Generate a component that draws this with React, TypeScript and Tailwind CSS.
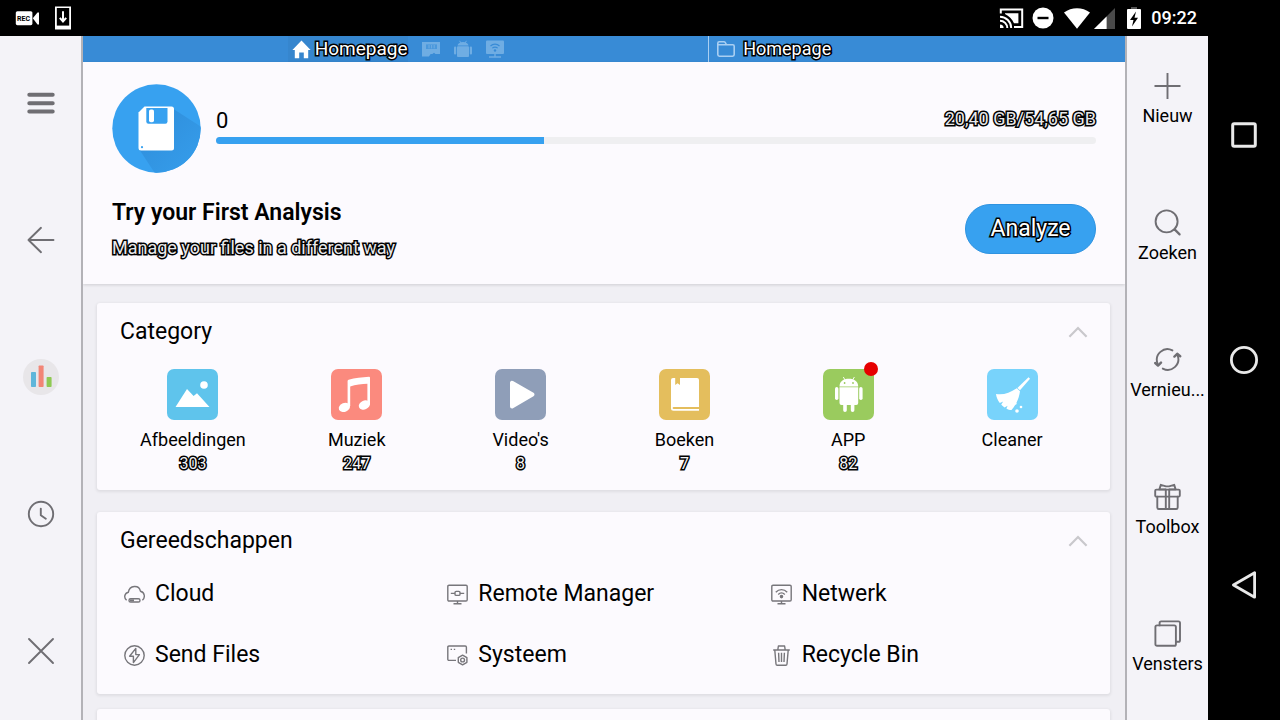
import type { ReactNode } from "react";

const outlined = "[-webkit-text-stroke:3px_#000] [paint-order:stroke_fill]";

/* ---------- status bar icons ---------- */

function RecIcon() {
  return (
    <svg width="25" height="16" viewBox="0 0 25 16" aria-hidden="true">
      <rect x="0.8" y="1.2" width="16.6" height="14" rx="1.6" fill="#fff" />
      <path d="M17.8 8.2 L22.5 2.6 H24 V14.4 H22.5 Z" fill="#fff" />
      <text x="2" y="11" fontSize="7" fontWeight="700" fontFamily="Roboto, sans-serif" fill="#000">
        REC
      </text>
    </svg>
  );
}

function PhoneDownloadIcon() {
  return (
    <svg width="18" height="24" viewBox="0 0 18 24" aria-hidden="true">
      <rect x="1" y="0.5" width="16" height="23" fill="#fff" />
      <rect x="2.8" y="2" width="12.4" height="17.6" fill="#000" />
      <path d="M9 5.2 V14.5 M5.8 11.8 L9 15.4 L12.2 11.8" fill="none" stroke="#fff" strokeWidth="2" />
    </svg>
  );
}

function CastIcon() {
  return (
    <svg width="25" height="21" viewBox="0 0 25 21" fill="none" stroke="#fff" aria-hidden="true">
      <path d="M1.8 5.5 V1.5 H23.2 V19 H15" strokeWidth="2" />
      <path d="M6 6 V5.3 H19.4 V15.2 H15 C13 11 10 8 6 6 Z" fill="#fff" stroke="none" />
      <path d="M1 8.8 C7 8.8 12.2 13.8 12.2 20 M1 12.7 C5 12.7 8.3 16 8.3 20" strokeWidth="2" />
      <path d="M1 16.4 A3.6 3.6 0 0 1 4.6 20 H1 Z" fill="#fff" stroke="none" />
    </svg>
  );
}

function DoNotDisturbIcon() {
  return (
    <svg width="22" height="22" viewBox="0 0 22 22" aria-hidden="true">
      <circle cx="11" cy="11" r="10.5" fill="#fff" />
      <rect x="5.5" y="9.8" width="11" height="2.4" fill="#000" />
    </svg>
  );
}

function WifiIcon() {
  return (
    <svg width="26" height="21" viewBox="0 0 26 21" aria-hidden="true">
      <path d="M0 4.4 C7.5 -1.3 18.5 -1.3 26 4.4 L13 20.7 Z" fill="#fff" />
    </svg>
  );
}

function SignalIcon() {
  return (
    <svg width="21" height="21" viewBox="0 0 21 21" aria-hidden="true">
      <path d="M0 21 L21 0 V21 Z" fill="#4a4a4a" />
      <path d="M0 21 L12.6 8.4 V21 Z" fill="#fff" />
    </svg>
  );
}

function BatteryIcon() {
  return (
    <svg width="14" height="22" viewBox="0 0 14 22" aria-hidden="true">
      <rect x="4" y="0" width="6" height="2.5" fill="#555" />
      <rect x="0" y="2" width="14" height="20" rx="1" fill="#fff" />
      <path d="M9 4.5 L3 13 H6.5 L5 19.5 L11 10.8 H7.5 Z" fill="#000" />
    </svg>
  );
}

/* ---------- tab bar icons ---------- */

function HomeIcon() {
  return (
    <svg width="19" height="19" viewBox="0 0 19 19" fill="#fff" aria-hidden="true">
      <path d="M9.5 0.5 L18.6 10 H16.2 V18.3 H11.8 V12.6 H7.2 V18.3 H2.8 V10 H0.4 Z" />
    </svg>
  );
}

function SdCardIcon() {
  return (
    <svg width="18" height="18" viewBox="0 0 18 18" aria-hidden="true">
      <path d="M0 2 H18 V14 H13.5 L12 12.8 L10.4 14 H8.6 L7 16.4 H0 Z" fill="#6fade3" />
      <rect x="4" y="4.4" width="11" height="4.6" fill="#4a98dc" />
      <path d="M7 5 V8.4 M9.6 5 V8.4 M12.2 5 V8.4" stroke="#6fade3" />
    </svg>
  );
}

function AndroidSmallIcon() {
  return (
    <svg width="18" height="18" viewBox="0 0 18 18" fill="#6fade3" aria-hidden="true">
      <path d="M3.5 5.5 C4 0.8 14 0.8 14.5 5.5 Z" />
      <rect x="3" y="6.3" width="12" height="10.7" rx="1" />
      <rect x="0" y="6.5" width="2.2" height="8" rx="1" />
      <rect x="15.8" y="6.5" width="2.2" height="8" rx="1" />
      <path d="M5.5 0.8 L7 3 M12.5 0.8 L11 3" stroke="#6fade3" />
    </svg>
  );
}

function NetworkSmallIcon() {
  return (
    <svg width="18" height="18" viewBox="0 0 18 18" aria-hidden="true">
      <rect x="0" y="0.5" width="18" height="13.5" rx="1" fill="#6fade3" />
      <path d="M9 14 V17 M3 17 H15" stroke="#6fade3" strokeWidth="1.4" />
      <path d="M4.5 6 C7 3.5 11 3.5 13.5 6 M6.3 8.2 C8 6.8 10 6.8 11.7 8.2" fill="none" stroke="#388bd6" strokeWidth="1.1" />
      <circle cx="9" cy="10.5" r="1.2" fill="#388bd6" />
    </svg>
  );
}

function FolderIcon() {
  return (
    <svg width="18" height="16" viewBox="0 0 18 16" fill="none" stroke="#a9cff2" strokeWidth="1.6" aria-hidden="true">
      <path d="M0.8 3 V13.6 Q0.8 15.2 2.4 15.2 H15.6 Q17.2 15.2 17.2 13.6 V5.2 Q17.2 3.8 15.8 3.8 H9.6 L8 1.2 Q7.7 0.8 7 0.8 H2.2 Q0.8 0.8 0.8 2.2 Z M0.8 3.8 H9.5" />
    </svg>
  );
}

/* ---------- side rail icons ---------- */

function Line({ children }: { children: ReactNode }) {
  return (
    <svg
      width="28"
      height="28"
      viewBox="0 0 28 28"
      className="shrink-0"
      fill="none"
      stroke="#6f6e73"
      strokeWidth="1.9"
      strokeLinecap="round"
      strokeLinejoin="round"
      aria-hidden="true"
    >
      {children}
    </svg>
  );
}

const leftRail: { label: string; icon: ReactNode }[] = [
  {
    label: "Menu",
    icon: (
      <Line>
        <path d="M2.3 5.8 H25.7 M2.3 14.2 H25.7 M2.3 22.6 H25.7" strokeWidth="4" />
      </Line>
    ),
  },
  {
    label: "Back",
    icon: (
      <Line>
        <path d="M26.5 14 H1.5 M14 1.8 L1.5 14 L14 26.2" />
      </Line>
    ),
  },
  {
    label: "Analysis",
    icon: (
      <svg width="36" height="36" viewBox="0 0 36 36" aria-hidden="true">
        <circle cx="18" cy="18" r="18" fill="#e8e6e9" />
        <rect x="8" y="13" width="5" height="15" rx="0.8" fill="#5fb6da" />
        <rect x="15.6" y="6.5" width="5" height="21.5" rx="0.8" fill="#f28576" />
        <rect x="23.6" y="18" width="5" height="10" rx="0.8" fill="#8fc954" />
      </svg>
    ),
  },
  {
    label: "History",
    icon: (
      <Line>
        <circle cx="14" cy="14" r="12.2" />
        <path d="M13.8 8.6 V15.3 L18.8 18.8" />
      </Line>
    ),
  },
  {
    label: "Close",
    icon: (
      <Line>
        <path d="M2 2 L26 26 M26 2 L2 26" />
      </Line>
    ),
  },
];

const rightRail: { label: string; icon: ReactNode }[] = [
  {
    label: "Nieuw",
    icon: (
      <Line>
        <path d="M13.5 1 V27 M0.5 14 H26.5" strokeLinecap="butt" />
      </Line>
    ),
  },
  {
    label: "Zoeken",
    icon: (
      <Line>
        <circle cx="12.6" cy="12.4" r="11" />
        <path d="M20.6 20.4 L25.6 25.4" strokeWidth="2.2" />
      </Line>
    ),
  },
  {
    label: "Vernieu...",
    icon: (
      <Line>
        <path d="M18.4 4.4 A10.6 10.6 0 0 0 3.6 17.6 M8.8 22.6 A10.6 10.6 0 0 0 23.6 9.4" />
        <path d="M1.2 17 L4 19.6 L7 16.6 M20.4 10.6 L23.2 7.8 L26.2 10.2" strokeWidth="2.4" />
      </Line>
    ),
  },
  {
    label: "Toolbox",
    icon: (
      <Line>
        <rect x="1.2" y="6.6" width="24.6" height="7" rx="1.2" />
        <path d="M3.3 13.6 V24.6 Q3.3 26 4.7 26 H22.3 Q23.7 26 23.7 24.6 V13.6 M11.8 6.6 V26 M15.2 6.6 V26" />
        <path d="M11.6 6.4 H5.4 L6.8 1.8 L12 3.4 H15 L20.2 1.8 L21.6 6.4 H15.4" />
      </Line>
    ),
  },
  {
    label: "Vensters",
    icon: (
      <Line>
        <rect x="1.4" y="5.4" width="20.5" height="20.4" rx="1.6" />
        <path d="M5.6 5.4 V3 Q5.6 1.4 7.2 1.4 H24.4 Q26 1.4 26 3 V20.2 Q26 21.8 24.4 21.8 H22" />
      </Line>
    ),
  },
];

/* ---------- categories ---------- */

type Category = { label: string; count?: string; tile: string; badge?: boolean; icon: ReactNode };

const categories: Category[] = [
  {
    label: "Afbeeldingen",
    count: "303",
    tile: "bg-[#5fc4ec]",
    icon: (
      <>
        <circle cx="37" cy="16" r="3.8" />
        <path d="M8.5 38 L20 20 L26.6 27 L30 24.2 L42.5 38 Z" />
      </>
    ),
  },
  {
    label: "Muziek",
    count: "247",
    tile: "bg-[#fb8a7e]",
    icon: (
      <>
        <path d="M16.6 12 Q16.6 11 17.6 10.7 C24 9 31 8.2 38 7.8 Q39 7.8 39 8.8 V35 H36.4 V14.8 C31 15 24.5 15.6 19.2 17.4 V37 H16.6 Z" />
        <ellipse cx="13.4" cy="38.3" rx="5.8" ry="4.4" transform="rotate(-22 13.4 38.3)" />
        <ellipse cx="33.4" cy="36" rx="5.8" ry="4.4" transform="rotate(-22 33.4 36)" />
      </>
    ),
  },
  {
    label: "Video's",
    count: "8",
    tile: "bg-[#8f9eb8]",
    icon: (
      <path
        d="M17 13.8 V37.4 L37.5 25.5 Z"
        stroke="#fff"
        strokeWidth="4"
        strokeLinejoin="round"
      />
    ),
  },
  {
    label: "Boeken",
    count: "7",
    tile: "bg-[#e4be5d]",
    icon: (
      <>
        <path d="M14 9 H16.2 V16 L18.6 14.2 L21 16 V9 H38 Q40 9 40 11 V38 H15 Q13.6 38 13.6 39 Q13.6 40 15 40 H40 V41.8 H14.5 Q12 41.8 12 39.3 V11 Q12 9 14 9 Z" />
        <path d="M14.5 38.9 H40" stroke="#e4be5d" strokeWidth="1.2" />
      </>
    ),
  },
  {
    label: "APP",
    count: "82",
    tile: "bg-[#9acb5e]",
    badge: true,
    icon: (
      <>
        <path d="M16.5 17.5 C16.5 12.4 20.5 9.8 25.8 9.8 C31 9.8 35.2 12.4 35.2 17.5 Z" />
        <path d="M20.3 8 L22.3 11.4 M31.4 8 L29.4 11.4" stroke="#fff" strokeWidth="0.9" />
        <circle cx="21.6" cy="14" r="0.9" fill="#9acb5e" />
        <circle cx="30" cy="14" r="0.9" fill="#9acb5e" />
        <path d="M16.5 18.2 H35.2 V34 Q35.2 36 33.2 36 H31.4 V41.2 Q31.4 43 29.6 43 Q27.8 43 27.8 41.2 V36 H23.8 V41.2 Q23.8 43 22 43 Q20.2 43 20.2 41.2 V36 H18.5 Q16.5 36 16.5 34 Z" />
        <rect x="12" y="18" width="3.4" height="13" rx="1.7" />
        <rect x="36.2" y="18" width="3.4" height="13" rx="1.7" />
      </>
    ),
  },
  {
    label: "Cleaner",
    tile: "bg-[#78d3fb]",
    icon: (
      <>
        <path d="M41.5 8.2 L43 9.8 L33 21.2 L30.4 19 Z" />
        <path d="M29.8 19.2 L33 22.2 C32.2 28.5 29.5 35.5 24.5 41 C22.6 41 21 40.4 19.4 39.4 L20.6 36.8 L17.6 38.4 C16.2 37.6 15 36.6 14.2 35.6 L16.2 32.6 L12.8 34 C10.8 31.6 9.4 28.4 9 25 C16.5 26.2 22.8 23.8 29.8 19.2 Z" />
        <circle cx="28.6" cy="34.6" r="1.1" />
        <circle cx="34" cy="38" r="1.3" />
        <circle cx="30" cy="42" r="1.8" />
      </>
    ),
  },
];

/* ---------- tools ---------- */

const tools: { label: string; icon: ReactNode }[] = [
  {
    label: "Cloud",
    icon: (
      <>
        <path d="M2.6 16.2 C-0.6 13.6 0.6 9 4.4 8.2 C5.4 0.8 15.2 0.6 16.4 7.2 C21.2 8.2 21.2 14 18.4 16.2" />
        <rect x="5" y="14.8" width="11" height="3.2" rx="1.6" />
        <path d="M6 16.4 H10" strokeWidth="2" />
      </>
    ),
  },
  {
    label: "Remote Manager",
    icon: (
      <>
        <rect x="0.8" y="1.2" width="19.4" height="15.8" rx="1.2" />
        <path d="M10.5 17 V19.6 M6.5 19.7 H14.5 M3.8 9.4 H8 M13 9.4 H17.2" />
        <rect x="8" y="7.4" width="5" height="4" rx="1.2" />
      </>
    ),
  },
  {
    label: "Netwerk",
    icon: (
      <>
        <rect x="0.8" y="1.2" width="19.4" height="15.8" rx="1.2" />
        <path d="M10.5 17 V19.6 M6.5 19.7 H14.5 M4.8 8.2 C8 4.8 13 4.8 16.2 8.2 M7.2 10.4 C9.2 8.4 11.8 8.4 13.8 10.4" />
        <circle cx="10.5" cy="12.6" r="1.1" fill="#77767b" />
      </>
    ),
  },
  {
    label: "Send Files",
    icon: (
      <>
        <circle cx="10.5" cy="10.5" r="9.7" />
        <path d="M11.8 3.4 L5.6 11.2 H9.4 V17.6 L15.4 9.6 H11.8 Z" />
      </>
    ),
  },
  {
    label: "Systeem",
    icon: (
      <>
        <path d="M9 15.4 H2 Q0.8 15.4 0.8 14.2 V2.2 Q0.8 1 2 1 H18.2 Q19.4 1 19.4 2.2 V8.6 M3.6 4.4 H5 M6.8 4.4 H8.2" />
        <path d="M15.6 10.2 L19.9 12.7 V17.3 L15.6 19.8 L11.3 17.3 V12.7 Z" />
        <circle cx="15.6" cy="15" r="1.9" />
      </>
    ),
  },
  {
    label: "Recycle Bin",
    icon: (
      <>
        <path d="M2.2 5 H18.8 M6.8 4.8 L7.4 1 H13.6 L14.2 4.8 M3.8 5.2 L5 19 Q5.1 20.2 6.2 20.2 H14.8 Q15.9 20.2 16 19 L17.2 5.2" />
        <path d="M7.6 7.8 L8 17 M10.5 7.8 V17 M13.4 7.8 L13 17" />
      </>
    ),
  },
];

function CardHeader({ title }: { title: string }) {
  return (
    <button type="button" aria-expanded="true" className="flex w-full items-center justify-between pt-[15px] pr-[22px] pl-[23px] text-left">
      <h2 className="text-[23px] leading-7">{title}</h2>
      <svg width="20" height="12" viewBox="0 0 20 12" fill="none" stroke="#c9c8cc" strokeWidth="2.2" aria-hidden="true">
        <path d="M1.4 10.8 L10 2 L18.6 10.8" />
      </svg>
    </button>
  );
}

function Card({ children }: { children?: ReactNode }) {
  return (
    <section className="rounded-[3px] bg-[#fcfafe] shadow-[0_1px_3px_1px_rgba(0,0,0,0.07)]">{children}</section>
  );
}

export default function App() {
  return (
    <div className="flex h-screen overflow-hidden bg-black font-[Roboto,sans-serif] text-black">
      <div className="flex min-w-0 flex-1 flex-col">
        <header className="flex h-9 shrink-0 items-center justify-between pr-[11px] pl-[15px]">
          <div className="flex items-center gap-[14px]">
            <RecIcon />
            <PhoneDownloadIcon />
          </div>
          <div className="flex items-center text-white">
            <CastIcon />
            <span className="pl-2">
              <DoNotDisturbIcon />
            </span>
            <span className="pl-2.5">
              <WifiIcon />
            </span>
            <span className="pl-1">
              <SignalIcon />
            </span>
            <span className="pl-3">
              <BatteryIcon />
            </span>
            <time className="pl-2.5 text-lg leading-6 font-medium">09:22</time>
          </div>
        </header>

        <div className="flex min-h-0 flex-1">
          <nav aria-label="Navigation" className="grid w-[83px] shrink-0 grid-rows-5 border-r-2 border-[#b3b2b7] bg-[#f4f3f8]">
            {leftRail.map((item) => (
              <button key={item.label} type="button" aria-label={item.label} className="flex items-center justify-center pb-0.5">
                {item.icon}
              </button>
            ))}
          </nav>

          <main className="flex min-w-0 flex-1 flex-col overflow-hidden bg-[#f0eff4]">
            <div className="flex h-[26px] shrink-0 bg-[#388bd6] text-white">
              <div className="flex w-3/5 items-center justify-center gap-[14px]">
                <button type="button" className="flex h-full items-center gap-1 bg-[#3686ce] pl-1">
                  <HomeIcon />
                  <span className={`text-[19px] leading-6 ${outlined}`}>Homepage</span>
                </button>
                <SdCardIcon />
                <AndroidSmallIcon />
                <NetworkSmallIcon />
              </div>
              <button type="button" className="flex flex-1 items-center gap-2 border-l border-[#a9cff2] pl-2">
                <FolderIcon />
                <span className={`text-lg leading-6 ${outlined}`}>Homepage</span>
              </button>
            </div>

            <section className="shrink-0 bg-[#fcfafe] px-[29px] py-[22px] shadow-[0_1px_3px_rgba(0,0,0,0.14)]">
              <div className="flex items-center gap-[15px]">
                <svg width="89" height="89" viewBox="0 0 89 89" className="shrink-0" aria-hidden="true">
                  <defs>
                    <clipPath id="disc">
                      <circle cx="44.5" cy="44.5" r="44.2" />
                    </clipPath>
                    <linearGradient id="cast-shadow" x1="0" y1="0" x2="1" y2="1">
                      <stop offset="0.2" stopColor="#3090dd" />
                      <stop offset="0.75" stopColor="#359cea" />
                    </linearGradient>
                  </defs>
                  <circle cx="44.5" cy="44.5" r="44.2" fill="#37a1f0" />
                  <path d="M60 24 L100 50 V100 H50 L27 65 Z" fill="url(#cast-shadow)" clipPath="url(#disc)" />
                  <path d="M32.5 22.5 H59.5 Q62 22.5 62 25 V64 Q62 66.5 59.5 66.5 H29 Q26.5 66.5 26.5 64 V28.5 Z" fill="#fff" />
                  <path d="M34.3 24 H55.5 V37.6 Q55.5 39.8 53.3 39.8 H36.5 Q34.3 39.8 34.3 37.6 Z" fill="#37a1f0" />
                  <rect x="37" y="25.5" width="5" height="12.8" rx="1.8" fill="#fff" />
                  <circle cx="30" cy="63.2" r="1.1" fill="#37a1f0" />
                </svg>
                <div className="flex min-w-0 flex-1 flex-col gap-0.5 pb-1.5">
                  <div className="flex items-start justify-between">
                    <span className="text-[22px] leading-7">0</span>
                    <span className={`text-lg leading-6 text-[#e8e8ea] ${outlined}`}>20,40 GB/54,65 GB</span>
                  </div>
                  <div
                    role="progressbar"
                    aria-label="Storage used"
                    aria-valuenow={37}
                    aria-valuemin={0}
                    aria-valuemax={100}
                    className="h-[7px] overflow-hidden rounded-full bg-[#efeff1]"
                  >
                    <div className="h-full bg-[#37a1f0]" style={{ width: `${(20.4 / 54.65) * 100}%` }} />
                  </div>
                </div>
              </div>
              <div className="flex items-end justify-between pt-[26px]">
                <div className="flex flex-col gap-[7px]">
                  <h1 className="text-[23px] leading-7 font-semibold">Try your First Analysis</h1>
                  <p className={`text-lg leading-7 text-[#e8e8ea] ${outlined}`}>Manage your files in a different way</p>
                </div>
                <button
                  type="button"
                  className="mb-2 h-[50px] w-[131px] rounded-full border border-[#2f93e0] bg-[#37a1f0] text-[23px] text-white"
                >
                  <span className={outlined}>Analyze</span>
                </button>
              </div>
            </section>

            <div className="flex flex-col px-[15px] pt-[19px] pl-3.5">
              <Card>
                <CardHeader title="Category" />
                <div className="grid grid-cols-6 pt-[23px] pr-4 pb-3.5 pl-3.5">
                  {categories.map((c) => (
                    <button key={c.label} type="button" className="flex flex-col items-center justify-start">
                      <span className={`relative mb-2 block rounded-[7px] ${c.tile}`}>
                        <svg width="51" height="51" viewBox="0 0 51 51" fill="#fff" aria-hidden="true">
                          {c.icon}
                        </svg>
                        {c.badge && <span className="absolute -top-[7px] -right-1 size-3.5 rounded-full bg-[#e60000]" />}
                      </span>
                      <span className="text-lg leading-6">{c.label}</span>
                      {c.count && <span className={`text-base leading-6 text-[#f4f4f6] ${outlined}`}>{c.count}</span>}
                    </button>
                  ))}
                </div>
              </Card>

              <div className="pt-[22px] pb-[15px]">
                <Card>
                  <CardHeader title="Gereedschappen" />
                  <div className="grid grid-cols-3 gap-y-[33px] pt-[25px] pr-4 pb-[25px] pl-[27px]">
                    {tools.map((t) => (
                      <button key={t.label} type="button" className="flex items-center gap-2.5 text-left text-[23px] leading-7">
                        <svg
                          width="21"
                          height="21"
                          viewBox="0 0 21 21"
                          fill="none"
                          stroke="#77767b"
                          strokeWidth="1.4"
                          strokeLinejoin="round"
                          aria-hidden="true"
                        >
                          {t.icon}
                        </svg>
                        {t.label}
                      </button>
                    ))}
                  </div>
                </Card>
              </div>

              <Card>
                <div className="h-16" />
              </Card>
            </div>
          </main>

          <nav aria-label="Actions" className="grid w-[83px] shrink-0 grid-rows-5 border-l-2 border-[#b3b2b7] bg-[#f4f3f8]">
            {rightRail.map((item) => (
              <button key={item.label} type="button" className="flex flex-col items-center justify-center gap-1.5 pb-2.5">
                {item.icon}
                <span className="text-lg leading-5">{item.label}</span>
              </button>
            ))}
          </nav>
        </div>
      </div>

      <nav aria-label="System" className="grid w-[72px] shrink-0 grid-rows-3 py-[22px]">
        <button type="button" aria-label="Recent apps" className="flex items-center justify-center">
          <svg width="30" height="30" viewBox="0 0 30 30" fill="none" stroke="#e9e9e9" strokeWidth="3" aria-hidden="true">
            <rect x="3.7" y="3.7" width="22.6" height="22.6" rx="1.5" />
          </svg>
        </button>
        <button type="button" aria-label="Home" className="flex items-center justify-center">
          <svg width="30" height="30" viewBox="0 0 30 30" fill="none" stroke="#e9e9e9" strokeWidth="2.8" aria-hidden="true">
            <circle cx="15" cy="15" r="12.6" />
          </svg>
        </button>
        <button type="button" aria-label="Back" className="flex items-center justify-center">
          <svg width="30" height="30" viewBox="0 0 30 30" fill="none" stroke="#e9e9e9" strokeWidth="2.8" strokeLinejoin="round" aria-hidden="true">
            <path d="M25.6 2.8 V27.2 L4.4 15 Z" />
          </svg>
        </button>
      </nav>
    </div>
  );
}
